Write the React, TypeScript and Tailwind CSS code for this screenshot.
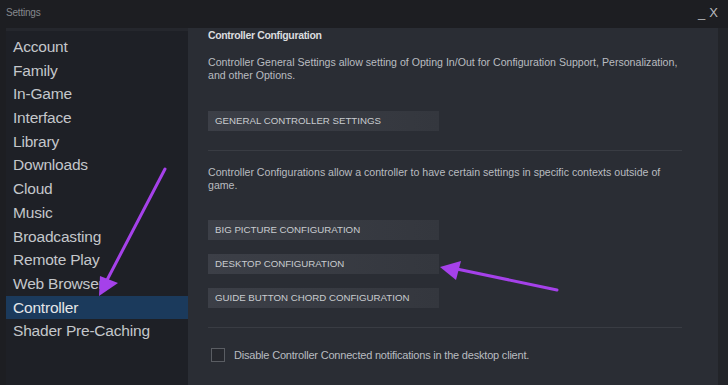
import React from "react";

const items = [
  "Account",
  "Family",
  "In-Game",
  "Interface",
  "Library",
  "Downloads",
  "Cloud",
  "Music",
  "Broadcasting",
  "Remote Play",
  "Web Browser",
  "Controller",
  "Shader Pre-Caching",
];

const font = { fontFamily: '"Liberation Sans", Arial, sans-serif' };

function ConfigButton({ label }: { label: string }) {
  return (
    <div className="w-[231px] h-[20px] flex items-center pl-[7px] bg-gradient-to-r from-[#3c3f47] to-[#34373e] text-[9.7px] text-[#c9ccd0]">
      {label}
    </div>
  );
}

export default function App() {
  return (
    <div
      className="relative w-[728px] h-[385px] overflow-hidden bg-[#1d1e22] flex flex-col"
      style={font}
    >
      {/* title bar */}
      <div className="h-[28px] flex items-start justify-between px-[6px] pt-[5px] shrink-0">
        <span className="text-[10px] text-[#85888d] tracking-[-0.2px]">Settings</span>
        <span className="text-[13px] text-[#b8babe] pr-[4px] flex items-end gap-[4px] pt-[1px]">
          <span className="leading-none">_</span>
          <span className="leading-none">X</span>
        </span>
      </div>

      <div className="flex-1 flex pl-[6px]">
        {/* sidebar */}
        <div className="w-[182px] shrink-0 bg-[#1e2026] pt-[4px] border-t-[3px] border-[#25272d]">
          {items.map((it) => (
            <div
              key={it}
              className={`leading-[23.7px] h-[23.7px] pl-[7px] text-[15.5px] tracking-[-0.2px] ${
                it === "Controller" ? "bg-[#1b3a5c] text-[#e4e6e8]" : "text-[#c4c7cb]"
              }`}
            >
              {it}
            </div>
          ))}
        </div>

        {/* content */}
        <div className="flex-1 flex bg-[#2a2d34]">
          <div className="flex-1 pl-[20px] pt-0">
            <div className="text-[10.5px] font-bold text-[#dadcdf] leading-[14px] tracking-[-0.35px]">
              Controller Configuration
            </div>
            <p className="mt-[14px] text-[10.6px] leading-[12.5px] text-[#b9bcc0] w-[475px]">
              Controller General Settings allow setting of Opting In/Out for Configuration Support,
              Personalization, and other Options.
            </p>
            <div className="mt-[30px]">
              <ConfigButton label="GENERAL CONTROLLER SETTINGS" />
            </div>
            <div className="mt-[19px] h-px w-[474px] bg-[#393c43]" />
            <p className="mt-[15px] text-[10.6px] leading-[12.5px] text-[#b9bcc0] w-[475px]">
              Controller Configurations allow a controller to have certain settings in specific
              contexts outside of game.
            </p>
            <div className="mt-[29px] flex flex-col gap-[14px]">
              <ConfigButton label="BIG PICTURE CONFIGURATION" />
              <ConfigButton label="DESKTOP CONFIGURATION" />
              <ConfigButton label="GUIDE BUTTON CHORD CONFIGURATION" />
            </div>
            <div className="mt-[19px] h-px w-[474px] bg-[#393c43]" />
            <div className="mt-[19px] flex items-center gap-[9px] pl-[3px]">
              <div className="w-[14px] h-[14px] border border-[#5a5d63] bg-[#26282e]" />
              <span className="text-[11px] text-[#b9bcc0] tracking-[-0.2px]">
                Disable Controller Connected notifications in the desktop client.
              </span>
            </div>
          </div>
          <div className="w-[10px] shrink-0 bg-[#222429]" />
        </div>
      </div>

      {/* annotation arrows */}
      <svg
        className="absolute inset-0 pointer-events-none"
        width="728"
        height="385"
        viewBox="0 0 728 385"
      >
        <line x1="165" y1="169" x2="106" y2="282" stroke="#a541ea" strokeWidth="3" strokeLinecap="round" />
        <polygon points="99,296 100,276 118,283" fill="#a541ea" />
        <line x1="557" y1="290" x2="452" y2="268" stroke="#a541ea" strokeWidth="3" strokeLinecap="round" />
        <polygon points="440,267 461,261 456,280" fill="#a541ea" />
      </svg>
    </div>
  );
}
